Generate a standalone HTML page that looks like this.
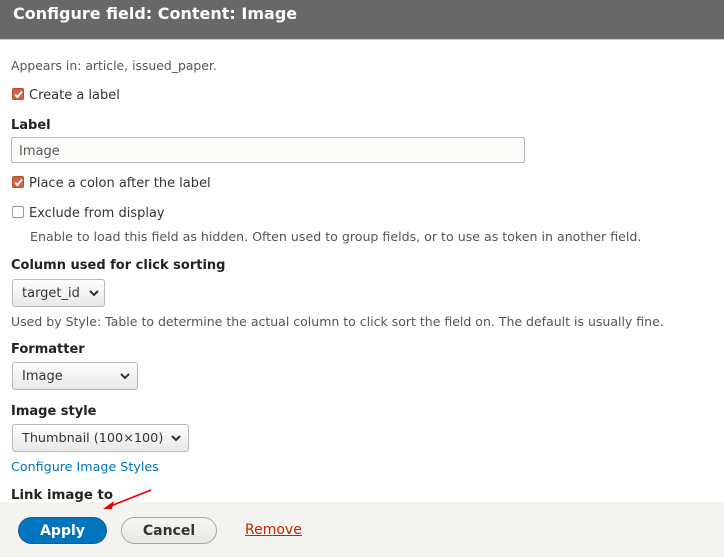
<!DOCTYPE html>
<html><head><meta charset="utf-8"><style>
*{box-sizing:border-box;margin:0;padding:0}
body{width:724px;height:557px;overflow:hidden;background:#fff;font-family:"DejaVu Sans","Liberation Sans",sans-serif;font-size:13px;color:#333;position:relative}
.hdr{position:absolute;left:0;top:0;width:724px;height:40px;background:#686868;border-bottom:1px solid #ccc}
.hdr h1{position:absolute;left:13px;top:4px;color:#fff;font-size:16px;font-weight:bold}
.a{position:absolute;white-space:nowrap}
.b{font-weight:bold;color:#222}
.cb{position:absolute;width:12px;height:12px;border-radius:2px;background:#d3633f;border:1px solid #b4502f}
.cb svg{position:absolute;left:1px;top:1px}
.cbu{position:absolute;width:12px;height:12px;border-radius:2px;background:#fff;border:1px solid #999}
.sel{position:absolute;height:28px;border:1px solid #b8b8b8;border-radius:3px;background:linear-gradient(#fefefe,#e8e8e8);padding-left:9px;line-height:27px;color:#333}
.sel svg{position:absolute;top:10px}
.inp{position:absolute;left:11px;top:137px;width:514px;height:26px;border:1px solid #b8b8b8;border-radius:2px;background:#fcfcfa;padding-left:7px;line-height:27px;color:#555}
.bar{position:absolute;left:0;top:502px;width:724px;height:55px;background:#f3f3ef}
.btn{position:absolute;top:517px;height:27px;border-radius:14px;font-weight:bold;font-size:14px;text-align:center;line-height:27px}
</style></head><body>
<div class="hdr"><h1>Configure field: Content: Image</h1></div>
<div class="a" style="left:11px;color:#555;font-size:12.4px;top:58px">Appears in: article, issued_paper.</div>
<div class="cb" style="left:12px;top:88px"><svg width="9" height="9"><path d="M1 4.5L3.5 7L8 1.5" stroke="#fff" stroke-width="2" fill="none"/></svg></div>
<div class="a" style="left:29px;top:88px">Create a label</div>
<div class="a b" style="left:11px;top:118px">Label</div>
<div class="inp">Image</div>
<div class="cb" style="left:12px;top:176px"><svg width="9" height="9"><path d="M1 4.5L3.5 7L8 1.5" stroke="#fff" stroke-width="2" fill="none"/></svg></div>
<div class="a" style="left:29px;top:176px">Place a colon after the label</div>
<div class="cbu" style="left:12px;top:206px"></div>
<div class="a" style="left:29px;top:206px">Exclude from display</div>
<div class="a" style="left:30px;top:229px;font-size:12.6px;color:#555">Enable to load this field as hidden. Often used to group fields, or to use as token in another field.</div>
<div class="a b" style="left:11px;top:258px">Column used for click sorting</div>
<div class="sel" style="left:12px;top:279px;width:93px">target_id<svg width="10" height="7" style="left:76px"><path d="M1 1L5 5L9 1" stroke="#333" stroke-width="2" fill="none"/></svg></div>
<div class="a" style="left:11px;top:314px;font-size:12.5px;color:#555">Used by Style: Table to determine the actual column to click sort the field on. The default is usually fine.</div>
<div class="a b" style="left:11px;top:342px">Formatter</div>
<div class="sel" style="left:12px;top:362px;width:126px">Image<svg width="10" height="7" style="left:107px"><path d="M1 1L5 5L9 1" stroke="#333" stroke-width="2" fill="none"/></svg></div>
<div class="a b" style="left:11px;top:404px">Image style</div>
<div class="sel" style="left:12px;top:424px;width:177px;font-size:12.8px">Thumbnail (100×100)<svg width="10" height="7" style="left:158px"><path d="M1 1L5 5L9 1" stroke="#333" stroke-width="2" fill="none"/></svg></div>
<div class="a" style="left:11px;top:459px;color:#0074bd;font-size:12.7px">Configure Image Styles</div>
<div class="a b" style="left:11px;top:488px;font-size:13.3px">Link image to</div>
<div class="bar"></div>
<svg class="a" style="left:100px;top:488px" width="55" height="25"><path d="M51 2L8 19" stroke="#e00" stroke-width="1.6"/><path d="M3 21L14 13L12 21Z" fill="#e00"/></svg>
<div class="btn" style="left:18px;width:89px;background:#0074bd;color:#fff;border:1px solid #1e5c90">Apply</div>
<div class="btn" style="left:121px;width:96px;background:linear-gradient(#f6f6f3,#e8e8e4);color:#333;border:1px solid #a6a6a6">Cancel</div>
<div class="a" style="left:245px;top:522px;font-size:14px;color:#c72100;text-decoration:underline">Remove</div>
</body></html>
